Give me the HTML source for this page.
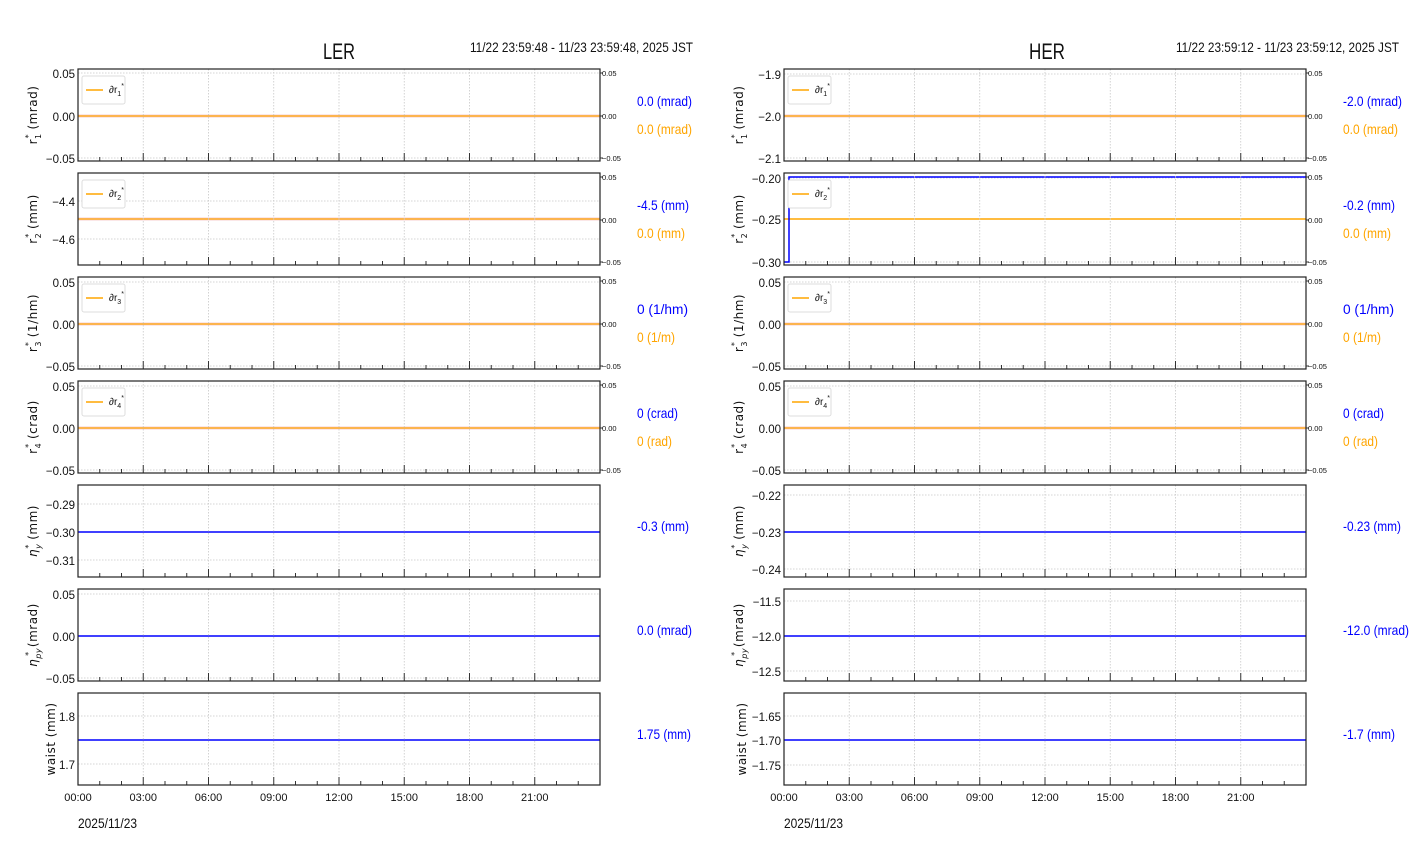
<!DOCTYPE html>
<html><head><meta charset="utf-8"><style>
html,body{margin:0;padding:0;background:#fff;}
svg{display:block;}
.t{font-family:"Liberation Sans",sans-serif;fill:#111;}
.yl{font-family:"DejaVu Sans","Liberation Sans",sans-serif;font-size:12px;fill:#111;letter-spacing:0.5px}
.tk{font-size:11.5px;text-anchor:end}
.rt{font-size:7.5px}
.xl{font-size:11px;text-anchor:middle}
.b{fill:#0000ff;font-size:14px}
.o{fill:#ffa500;font-size:14px}
.g{stroke:#c8c8c8;stroke-width:0.8;stroke-dasharray:1.5,1.5;fill:none}
.lg{font-size:10px}
</style></head><body>
<svg width="1412" height="864" viewBox="0 0 1412 864" xmlns="http://www.w3.org/2000/svg">
<defs>
<g id="f">
<path class="g" d="M65.25 0V92M130.5 0V92M195.75 0V92M261 0V92M326.25 0V92M391.5 0V92M456.75 0V92"/>
<path stroke="#333" stroke-width="1" d="M21.75 92v-4M43.5 92v-4M87 92v-4M108.75 92v-4M152.25 92v-4M174 92v-4M217.5 92v-4M239.25 92v-4M282.75 92v-4M304.5 92v-4M348 92v-4M369.75 92v-4M413.25 92v-4M435 92v-4M478.5 92v-4M500.25 92v-4M65.25 92v-8M130.5 92v-8M195.75 92v-8M261 92v-8M326.25 92v-8M391.5 92v-8M456.75 92v-8"/>
<rect x="0" y="0" width="522" height="92" fill="none" stroke="#222" stroke-width="1.2"/>
</g>
<g id="rt">
<path stroke="#333" d="M522 4h3M522 47h3M522 89h3"/>
<text class="t rt" x="524" y="7">0.05</text>
<text class="t rt" x="524" y="50">0.00</text>
<text class="t rt" x="524" y="92">−0.05</text>
</g>
<g id="lgb"><rect x="4" y="7" width="43" height="28" rx="2" fill="#fff" stroke="#ddd"/><path d="M8 21h17" stroke="#ffa500" stroke-width="1.6"/></g>
</defs>

<text class="t" x="339" y="59" font-size="22" text-anchor="middle" textLength="32" lengthAdjust="spacingAndGlyphs">LER</text>
<text class="t" x="470" y="52" font-size="14" textLength="223" lengthAdjust="spacingAndGlyphs">11/22 23:59:48 - 11/23 23:59:48, 2025 JST</text>
<text class="t" x="1047" y="59" font-size="22" text-anchor="middle" textLength="36" lengthAdjust="spacingAndGlyphs">HER</text>
<text class="t" x="1176" y="52" font-size="14" textLength="223" lengthAdjust="spacingAndGlyphs">11/22 23:59:12 - 11/23 23:59:12, 2025 JST</text>

<g transform="translate(78,69)">
<path class="g" d="M0 4H522M0 89H522"/><path d="M0 47H522" stroke="#f0a0a0" stroke-width="3" opacity="0.5"/><path d="M0 47H522" stroke="#ffa500" stroke-width="1.3"/>
<use href="#f"/><use href="#rt"/><use href="#lgb"/>
<text class="t lg" x="31" y="24">∂r<tspan font-size="7" dy="3">1</tspan><tspan font-size="7" dy="-8">*</tspan></text>
</g>
<g transform="translate(78,173)">
<path class="g" d="M0 28H522M0 66H522"/><path d="M0 46H522" stroke="#f0a0a0" stroke-width="3" opacity="0.5"/><path d="M0 46H522" stroke="#ffa500" stroke-width="1.3"/>
<use href="#f"/><use href="#rt"/><use href="#lgb"/>
<text class="t lg" x="31" y="24">∂r<tspan font-size="7" dy="3">2</tspan><tspan font-size="7" dy="-8">*</tspan></text>
</g>
<g transform="translate(78,277)">
<path class="g" d="M0 5H522M0 89H522"/><path d="M0 47H522" stroke="#f0a0a0" stroke-width="3" opacity="0.5"/><path d="M0 47H522" stroke="#ffa500" stroke-width="1.3"/>
<use href="#f"/><use href="#rt"/><use href="#lgb"/>
<text class="t lg" x="31" y="24">∂r<tspan font-size="7" dy="3">3</tspan><tspan font-size="7" dy="-8">*</tspan></text>
</g>
<g transform="translate(78,381)">
<path class="g" d="M0 5H522M0 89H522"/><path d="M0 47H522" stroke="#f0a0a0" stroke-width="3" opacity="0.5"/><path d="M0 47H522" stroke="#ffa500" stroke-width="1.3"/>
<use href="#f"/><use href="#rt"/><use href="#lgb"/>
<text class="t lg" x="31" y="24">∂r<tspan font-size="7" dy="3">4</tspan><tspan font-size="7" dy="-8">*</tspan></text>
</g>
<g transform="translate(78,485)">
<path class="g" d="M0 19H522M0 75H522"/><path d="M0 47H522" stroke="#0000ff" stroke-width="1.5"/><use href="#f"/>
</g>
<g transform="translate(78,589)">
<path class="g" d="M0 5H522M0 89H522"/><path d="M0 47H522" stroke="#0000ff" stroke-width="1.5"/><use href="#f"/>
</g>
<g transform="translate(78,693)">
<path class="g" d="M0 23H522M0 71H522"/><path d="M0 47H522" stroke="#0000ff" stroke-width="1.5"/><use href="#f"/>
</g>

<g class="t tk">
<text x="75" y="78">0.05</text><text x="75" y="121">0.00</text><text x="75" y="163">−0.05</text>
<text x="75" y="206">−4.4</text><text x="75" y="244">−4.6</text>
<text x="75" y="287">0.05</text><text x="75" y="329">0.00</text><text x="75" y="371">−0.05</text>
<text x="75" y="391">0.05</text><text x="75" y="433">0.00</text><text x="75" y="475">−0.05</text>
<text x="75" y="509">−0.29</text><text x="75" y="537">−0.30</text><text x="75" y="565">−0.31</text>
<text x="75" y="599">0.05</text><text x="75" y="641">0.00</text><text x="75" y="683">−0.05</text>
<text x="75" y="721">1.8</text><text x="75" y="769">1.7</text>
</g>
<g class="t tk">
<text x="781" y="79">−1.9</text><text x="781" y="121">−2.0</text><text x="781" y="163">−2.1</text>
<text x="781" y="183">−0.20</text><text x="781" y="224">−0.25</text><text x="781" y="267">−0.30</text>
<text x="781" y="287">0.05</text><text x="781" y="329">0.00</text><text x="781" y="371">−0.05</text>
<text x="781" y="391">0.05</text><text x="781" y="433">0.00</text><text x="781" y="475">−0.05</text>
<text x="781" y="500">−0.22</text><text x="781" y="537">−0.23</text><text x="781" y="574">−0.24</text>
<text x="781" y="606">−11.5</text><text x="781" y="641">−12.0</text><text x="781" y="676">−12.5</text>
<text x="781" y="721">−1.65</text><text x="781" y="745">−1.70</text><text x="781" y="770">−1.75</text>
</g>

<g transform="translate(784,69)">
<path class="g" d="M0 5H522M0 89H522"/><path d="M0 47H522" stroke="#f0a0a0" stroke-width="3" opacity="0.5"/><path d="M0 47H522" stroke="#ffa500" stroke-width="1.3"/>
<use href="#f"/><use href="#rt"/><use href="#lgb"/>
<text class="t lg" x="31" y="24">∂r<tspan font-size="7" dy="3">1</tspan><tspan font-size="7" dy="-8">*</tspan></text>
</g>
<g transform="translate(784,173)">
<path class="g" d="M0 5H522M0 46H522M0 89H522"/>
<path d="M0 46H522" stroke="#ffa500" stroke-width="1.5"/>
<path d="M0 89H5V4H522" stroke="#0000ff" stroke-width="1.5" fill="none"/>
<use href="#f"/><use href="#rt"/><use href="#lgb"/>
<text class="t lg" x="31" y="24">∂r<tspan font-size="7" dy="3">2</tspan><tspan font-size="7" dy="-8">*</tspan></text>
</g>
<g transform="translate(784,277)">
<path class="g" d="M0 5H522M0 89H522"/><path d="M0 47H522" stroke="#f0a0a0" stroke-width="3" opacity="0.5"/><path d="M0 47H522" stroke="#ffa500" stroke-width="1.3"/>
<use href="#f"/><use href="#rt"/><use href="#lgb"/>
<text class="t lg" x="31" y="24">∂r<tspan font-size="7" dy="3">3</tspan><tspan font-size="7" dy="-8">*</tspan></text>
</g>
<g transform="translate(784,381)">
<path class="g" d="M0 5H522M0 89H522"/><path d="M0 47H522" stroke="#f0a0a0" stroke-width="3" opacity="0.5"/><path d="M0 47H522" stroke="#ffa500" stroke-width="1.3"/>
<use href="#f"/><use href="#rt"/><use href="#lgb"/>
<text class="t lg" x="31" y="24">∂r<tspan font-size="7" dy="3">4</tspan><tspan font-size="7" dy="-8">*</tspan></text>
</g>
<g transform="translate(784,485)">
<path class="g" d="M0 10H522M0 84H522"/><path d="M0 47H522" stroke="#0000ff" stroke-width="1.5"/><use href="#f"/>
</g>
<g transform="translate(784,589)">
<path class="g" d="M0 12H522M0 82H522"/><path d="M0 47H522" stroke="#0000ff" stroke-width="1.5"/><use href="#f"/>
</g>
<g transform="translate(784,693)">
<path class="g" d="M0 23H522M0 72H522"/><path d="M0 47H522" stroke="#0000ff" stroke-width="1.5"/><use href="#f"/>
</g>

<g class="t" lengthAdjust="spacingAndGlyphs">
<text class="b" x="637" y="106" textLength="55" lengthAdjust="spacingAndGlyphs">0.0 (mrad)</text><text class="o" x="637" y="134" textLength="55" lengthAdjust="spacingAndGlyphs">0.0 (mrad)</text>
<text class="b" x="637" y="210" textLength="52" lengthAdjust="spacingAndGlyphs">-4.5 (mm)</text><text class="o" x="637" y="238" textLength="48" lengthAdjust="spacingAndGlyphs">0.0 (mm)</text>
<text class="b" x="637" y="314" textLength="51" lengthAdjust="spacingAndGlyphs">0 (1/hm)</text><text class="o" x="637" y="342" textLength="38" lengthAdjust="spacingAndGlyphs">0 (1/m)</text>
<text class="b" x="637" y="418" textLength="41" lengthAdjust="spacingAndGlyphs">0 (crad)</text><text class="o" x="637" y="446" textLength="35" lengthAdjust="spacingAndGlyphs">0 (rad)</text>
<text class="b" x="637" y="531" textLength="52" lengthAdjust="spacingAndGlyphs">-0.3 (mm)</text>
<text class="b" x="637" y="635" textLength="55" lengthAdjust="spacingAndGlyphs">0.0 (mrad)</text>
<text class="b" x="637" y="739" textLength="54" lengthAdjust="spacingAndGlyphs">1.75 (mm)</text>
<text class="b" x="1343" y="106" textLength="59" lengthAdjust="spacingAndGlyphs">-2.0 (mrad)</text><text class="o" x="1343" y="134" textLength="55" lengthAdjust="spacingAndGlyphs">0.0 (mrad)</text>
<text class="b" x="1343" y="210" textLength="52" lengthAdjust="spacingAndGlyphs">-0.2 (mm)</text><text class="o" x="1343" y="238" textLength="48" lengthAdjust="spacingAndGlyphs">0.0 (mm)</text>
<text class="b" x="1343" y="314" textLength="51" lengthAdjust="spacingAndGlyphs">0 (1/hm)</text><text class="o" x="1343" y="342" textLength="38" lengthAdjust="spacingAndGlyphs">0 (1/m)</text>
<text class="b" x="1343" y="418" textLength="41" lengthAdjust="spacingAndGlyphs">0 (crad)</text><text class="o" x="1343" y="446" textLength="35" lengthAdjust="spacingAndGlyphs">0 (rad)</text>
<text class="b" x="1343" y="531" textLength="58" lengthAdjust="spacingAndGlyphs">-0.23 (mm)</text>
<text class="b" x="1343" y="635" textLength="66" lengthAdjust="spacingAndGlyphs">-12.0 (mrad)</text>
<text class="b" x="1343" y="739" textLength="52" lengthAdjust="spacingAndGlyphs">-1.7 (mm)</text>
</g>

<g class="yl" text-anchor="middle">
<text transform="translate(37,115) rotate(-90)">r<tspan font-size="8" dy="4">1</tspan><tspan font-size="8" dx="-5" dy="-10">*</tspan><tspan dy="6"> (mrad)</tspan></text>
<text transform="translate(37,219) rotate(-90)">r<tspan font-size="8" dy="4">2</tspan><tspan font-size="8" dx="-5" dy="-10">*</tspan><tspan dy="6"> (mm)</tspan></text>
<text transform="translate(37,323) rotate(-90)">r<tspan font-size="8" dy="4">3</tspan><tspan font-size="8" dx="-5" dy="-10">*</tspan><tspan dy="6"> (1/hm)</tspan></text>
<text transform="translate(37,427) rotate(-90)">r<tspan font-size="8" dy="4">4</tspan><tspan font-size="8" dx="-5" dy="-10">*</tspan><tspan dy="6"> (crad)</tspan></text>
<text transform="translate(37,531) rotate(-90)"><tspan font-style="italic">η</tspan><tspan font-size="8" dy="4" font-style="italic">y</tspan><tspan font-size="8" dx="-5" dy="-10">*</tspan><tspan dy="6"> (mm)</tspan></text>
<text transform="translate(37,635) rotate(-90)"><tspan font-style="italic">η</tspan><tspan font-size="8" dy="4" font-style="italic">py</tspan><tspan font-size="8" dx="-8" dy="-10">*</tspan><tspan dy="6"> (mrad)</tspan></text>
<text transform="translate(55,739) rotate(-90)">waist (mm)</text>
<text transform="translate(743,115) rotate(-90)">r<tspan font-size="8" dy="4">1</tspan><tspan font-size="8" dx="-5" dy="-10">*</tspan><tspan dy="6"> (mrad)</tspan></text>
<text transform="translate(743,219) rotate(-90)">r<tspan font-size="8" dy="4">2</tspan><tspan font-size="8" dx="-5" dy="-10">*</tspan><tspan dy="6"> (mm)</tspan></text>
<text transform="translate(743,323) rotate(-90)">r<tspan font-size="8" dy="4">3</tspan><tspan font-size="8" dx="-5" dy="-10">*</tspan><tspan dy="6"> (1/hm)</tspan></text>
<text transform="translate(743,427) rotate(-90)">r<tspan font-size="8" dy="4">4</tspan><tspan font-size="8" dx="-5" dy="-10">*</tspan><tspan dy="6"> (crad)</tspan></text>
<text transform="translate(743,531) rotate(-90)"><tspan font-style="italic">η</tspan><tspan font-size="8" dy="4" font-style="italic">y</tspan><tspan font-size="8" dx="-5" dy="-10">*</tspan><tspan dy="6"> (mm)</tspan></text>
<text transform="translate(743,635) rotate(-90)"><tspan font-style="italic">η</tspan><tspan font-size="8" dy="4" font-style="italic">py</tspan><tspan font-size="8" dx="-8" dy="-10">*</tspan><tspan dy="6"> (mrad)</tspan></text>
<text transform="translate(746,739) rotate(-90)">waist (mm)</text>
</g>

<g class="t xl">
<text x="78" y="801">00:00</text><text x="143.25" y="801">03:00</text><text x="208.5" y="801">06:00</text><text x="273.75" y="801">09:00</text><text x="339" y="801">12:00</text><text x="404.25" y="801">15:00</text><text x="469.5" y="801">18:00</text><text x="534.75" y="801">21:00</text>
<text x="784" y="801">00:00</text><text x="849.25" y="801">03:00</text><text x="914.5" y="801">06:00</text><text x="979.75" y="801">09:00</text><text x="1045" y="801">12:00</text><text x="1110.25" y="801">15:00</text><text x="1175.5" y="801">18:00</text><text x="1240.75" y="801">21:00</text>
</g>
<text class="t" x="78" y="828" font-size="14" textLength="59" lengthAdjust="spacingAndGlyphs">2025/11/23</text>
<text class="t" x="784" y="828" font-size="14" textLength="59" lengthAdjust="spacingAndGlyphs">2025/11/23</text>
</svg>
</body></html>
